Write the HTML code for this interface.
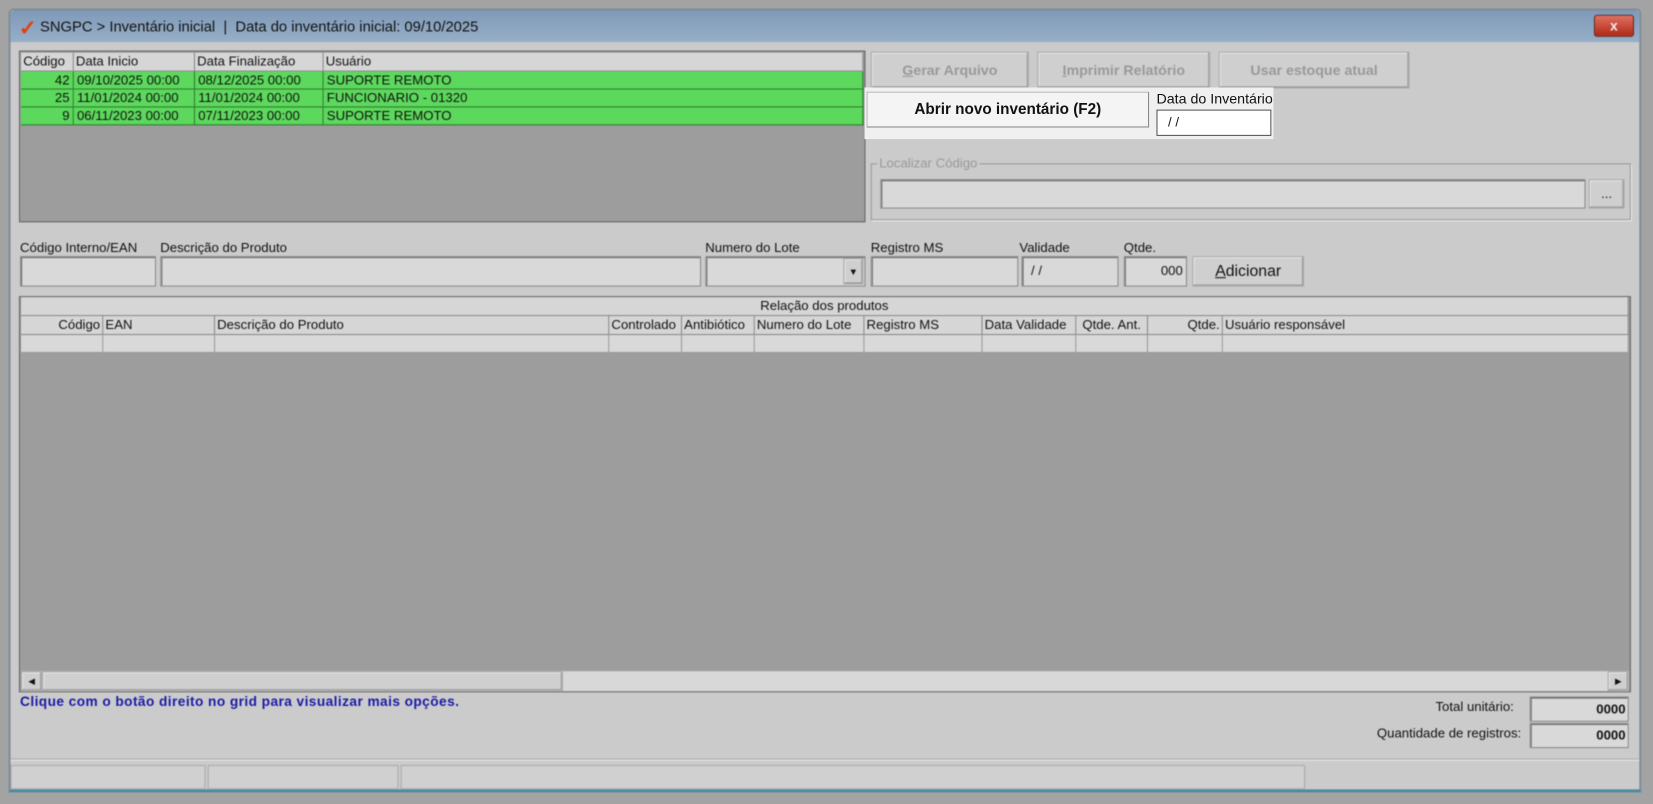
<!DOCTYPE html>
<html><head><meta charset="utf-8"><style>
html,body{margin:0;padding:0;width:1653px;height:804px;overflow:hidden;background:#a3a3a3;}
#f{position:absolute;left:0;top:0;width:1568px;height:763px;transform:scale(1.0542,1.0537);transform-origin:0 0;font-family:"Liberation Sans",sans-serif;font-size:12.5px;color:#111;letter-spacing:0;}
#b{position:absolute;inset:0;filter:blur(0.6px);}
.a{position:absolute;box-sizing:border-box;white-space:nowrap;overflow:hidden;}
.in{background:#d9d9d9;border:1px solid #8a8a8a;box-shadow:inset 1px 1px 0 #6a6a6a;}
.bt{background:#cfcfcf;border:1px solid #aaa;box-shadow:inset -1px -1px 0 #999,inset 1px 1px 0 #e8e8e8;text-align:center;}
.h{background:#d6d6d6;border-right:1px solid #888;border-bottom:1px solid #888;height:18px;line-height:17px;padding:0 2px;}
.g{background:#5cd85c;border-right:1px solid #2f7a2f;border-bottom:1px solid #2f7a2f;height:17px;line-height:16px;padding:0 3px;}
.c{background:#d9d9d9;border-right:1px solid #999;border-bottom:1px solid #999;height:17px;}
</style></head><body><div id="f"><div id="b">
<div class="a" style="left:8px;top:8px;width:1549px;height:744px;background:#cbcbcb;border:2px solid #7f8c99;border-radius:5px 5px 0 0;border-bottom:3px solid #4a8aa0;"></div>
<div class="a" style="left:10px;top:10px;width:1545px;height:30px;background:linear-gradient(#7f9ab8,#97afc8);border-radius:4px 4px 0 0;"></div>
<div class="a" style="left:18px;top:14px;font-size:20px;color:#e04010;font-weight:bold;">&#10003;</div>
<div class="a" style="left:38px;top:17px;font-size:14px;color:#111">SNGPC &gt; Inventário inicial &nbsp;| &nbsp;Data do inventário inicial: 09/10/2025</div>
<div class="a" style="left:1512px;top:14px;width:38px;height:21px;background:linear-gradient(#e07060,#b02a18);border:1px solid #6a2a20;border-radius:3px;color:#eee;font-weight:bold;text-align:center;line-height:19px;font-size:13px">x</div>
<div class="a" style="left:18px;top:48px;width:803px;height:163px;background:#9d9d9d;border:1px solid #666;"></div>
<div class="a h" style="left:20px;top:50px;width:50px">Código</div>
<div class="a h" style="left:70px;top:50px;width:115px">Data Inicio</div>
<div class="a h" style="left:185px;top:50px;width:122px">Data Finalização</div>
<div class="a h" style="left:307px;top:50px;width:512px">Usuário</div>
<div class="a g" style="left:20px;top:68px;width:50px;text-align:right">42</div><div class="a g" style="left:70px;top:68px;width:115px">09/10/2025 00:00</div><div class="a g" style="left:185px;top:68px;width:122px">08/12/2025 00:00</div><div class="a g" style="left:307px;top:68px;width:512px">SUPORTE REMOTO</div>
<div class="a g" style="left:20px;top:85px;width:50px;text-align:right">25</div><div class="a g" style="left:70px;top:85px;width:115px">11/01/2024 00:00</div><div class="a g" style="left:185px;top:85px;width:122px">11/01/2024 00:00</div><div class="a g" style="left:307px;top:85px;width:512px">FUNCIONARIO - 01320</div>
<div class="a g" style="left:20px;top:102px;width:50px;text-align:right">9</div><div class="a g" style="left:70px;top:102px;width:115px">06/11/2023 00:00</div><div class="a g" style="left:185px;top:102px;width:122px">07/11/2023 00:00</div><div class="a g" style="left:307px;top:102px;width:512px">SUPORTE REMOTO</div>
<div class="a bt" style="left:826px;top:49px;width:150px;height:35px;line-height:33px;color:#999;font-weight:bold;font-size:13.5px"><u>G</u>erar Arquivo</div>
<div class="a bt" style="left:984px;top:49px;width:164px;height:35px;line-height:33px;color:#999;font-weight:bold;font-size:13.5px"><u>I</u>mprimir Relatório</div>
<div class="a bt" style="left:1156px;top:49px;width:181px;height:35px;line-height:33px;color:#999;font-weight:bold;font-size:13.5px">Usar estoque atual</div>
<div class="a" style="left:826px;top:155px;width:721px;height:54px;border:1px solid #999;box-shadow:1px 1px 0 #eee"></div>
<div class="a" style="left:832px;top:148px;background:#cbcbcb;color:#999;padding:0 2px">Localizar Código</div>
<div class="a in" style="left:835px;top:170px;width:669px;height:28px"></div>
<div class="a bt" style="left:1507px;top:170px;width:34px;height:28px;line-height:26px">...</div>
<div class="a" style="left:19px;top:228px">Código Interno/EAN</div>
<div class="a" style="left:152px;top:228px">Descrição do Produto</div>
<div class="a" style="left:669px;top:228px">Numero do Lote</div>
<div class="a" style="left:826px;top:228px">Registro MS</div>
<div class="a" style="left:967px;top:228px">Validade</div>
<div class="a" style="left:1066px;top:228px">Qtde.</div>
<div class="a in" style="left:19px;top:243px;width:129px;height:29px"></div>
<div class="a in" style="left:152px;top:243px;width:513px;height:29px"></div>
<div class="a in" style="left:669px;top:243px;width:152px;height:29px"></div>
<div class="a bt" style="left:800px;top:245px;width:19px;height:25px;line-height:24px;font-size:9px">&#9660;</div>
<div class="a in" style="left:826px;top:243px;width:140px;height:29px"></div>
<div class="a in" style="left:969px;top:243px;width:92px;height:29px;padding:6px 8px">/ /</div>
<div class="a in" style="left:1066px;top:243px;width:60px;height:29px;padding:6px 3px;text-align:right">000</div>
<div class="a bt" style="left:1131px;top:243px;width:106px;height:29px;line-height:27px;font-size:15px"><u>A</u>dicionar</div>
<div class="a" style="left:18px;top:281px;width:1529px;height:376px;background:#9d9d9d;border:1px solid #666"></div>
<div class="a h" style="left:20px;top:282px;width:1525px;text-align:center">Relação dos produtos</div>
<div class="a h" style="left:20px;top:300px;width:78px;text-align:right">Código</div>
<div class="a h" style="left:98px;top:300px;width:106px">EAN</div>
<div class="a h" style="left:204px;top:300px;width:374px">Descrição do Produto</div>
<div class="a h" style="left:578px;top:300px;width:69px">Controlado</div>
<div class="a h" style="left:647px;top:300px;width:69px">Antibiótico</div>
<div class="a h" style="left:716px;top:300px;width:104px">Numero do Lote</div>
<div class="a h" style="left:820px;top:300px;width:112px">Registro MS</div>
<div class="a h" style="left:932px;top:300px;width:89px">Data Validade</div>
<div class="a h" style="left:1021px;top:300px;width:68px;text-align:center">Qtde. Ant.</div>
<div class="a h" style="left:1089px;top:300px;width:71px;text-align:right">Qtde.</div>
<div class="a h" style="left:1160px;top:300px;width:385px">Usuário responsável</div>
<div class="a c" style="left:20px;top:318px;width:78px"></div><div class="a c" style="left:98px;top:318px;width:106px"></div><div class="a c" style="left:204px;top:318px;width:374px"></div><div class="a c" style="left:578px;top:318px;width:69px"></div><div class="a c" style="left:647px;top:318px;width:69px"></div><div class="a c" style="left:716px;top:318px;width:104px"></div><div class="a c" style="left:820px;top:318px;width:112px"></div><div class="a c" style="left:932px;top:318px;width:89px"></div><div class="a c" style="left:1021px;top:318px;width:68px"></div><div class="a c" style="left:1089px;top:318px;width:71px"></div><div class="a c" style="left:1160px;top:318px;width:385px"></div>
<div class="a" style="left:20px;top:636px;width:1525px;height:20px;background:#d8d8d8;border-top:1px solid #999"></div>
<div class="a bt" style="left:20px;top:637px;width:20px;height:19px;font-size:8px;line-height:18px">&#9664;</div>
<div class="a bt" style="left:40px;top:637px;width:494px;height:19px"></div>
<div class="a bt" style="left:1525px;top:637px;width:20px;height:19px;font-size:8px;line-height:18px">&#9654;</div>
<div class="a" style="left:19px;top:658px;color:#1a1aa8;font-weight:bold;font-size:13px;letter-spacing:0.4px">Clique com o botão direito no grid para visualizar mais opções.</div>
<div class="a" style="left:1290px;top:664px;width:146px;text-align:right">Total unitário:</div>
<div class="a in" style="left:1451px;top:661px;width:94px;height:24px;padding:4px 2px;text-align:right;font-weight:bold">0000</div>
<div class="a" style="left:1270px;top:689px;width:173px;text-align:right">Quantidade de registros:</div>
<div class="a in" style="left:1451px;top:686px;width:94px;height:24px;padding:4px 2px;text-align:right;font-weight:bold">0000</div>
<div class="a" style="left:10px;top:720px;width:1545px;height:2px;background:#aaa;border-bottom:1px solid #eee"></div>
<div class="a" style="left:10px;top:726px;width:185px;height:23px;border:1px solid #aaa;background:#d0d0d0"></div>
<div class="a" style="left:197px;top:726px;width:181px;height:23px;border:1px solid #aaa;background:#d0d0d0"></div>
<div class="a" style="left:380px;top:726px;width:858px;height:23px;border:1px solid #aaa;background:#d0d0d0"></div>
</div>
<div class="a" style="left:820px;top:83px;width:388px;height:49px;background:#f0f0f0"></div>
<div class="a" style="left:822px;top:87px;width:268px;height:34px;background:#f4f4f4;border:1px solid #bbb;border-right-color:#888;border-bottom-color:#888;text-align:center;line-height:32px;font-weight:bold;font-size:14.5px">Abrir novo inventário (F2)</div>
<div class="a" style="left:1097px;top:86px;font-size:13.5px">Data do Inventário</div>
<div class="a" style="left:1097px;top:104px;width:109px;height:25px;background:#fff;border:1px solid #555;padding:4px 10px">/ /</div>
</div></body></html>
